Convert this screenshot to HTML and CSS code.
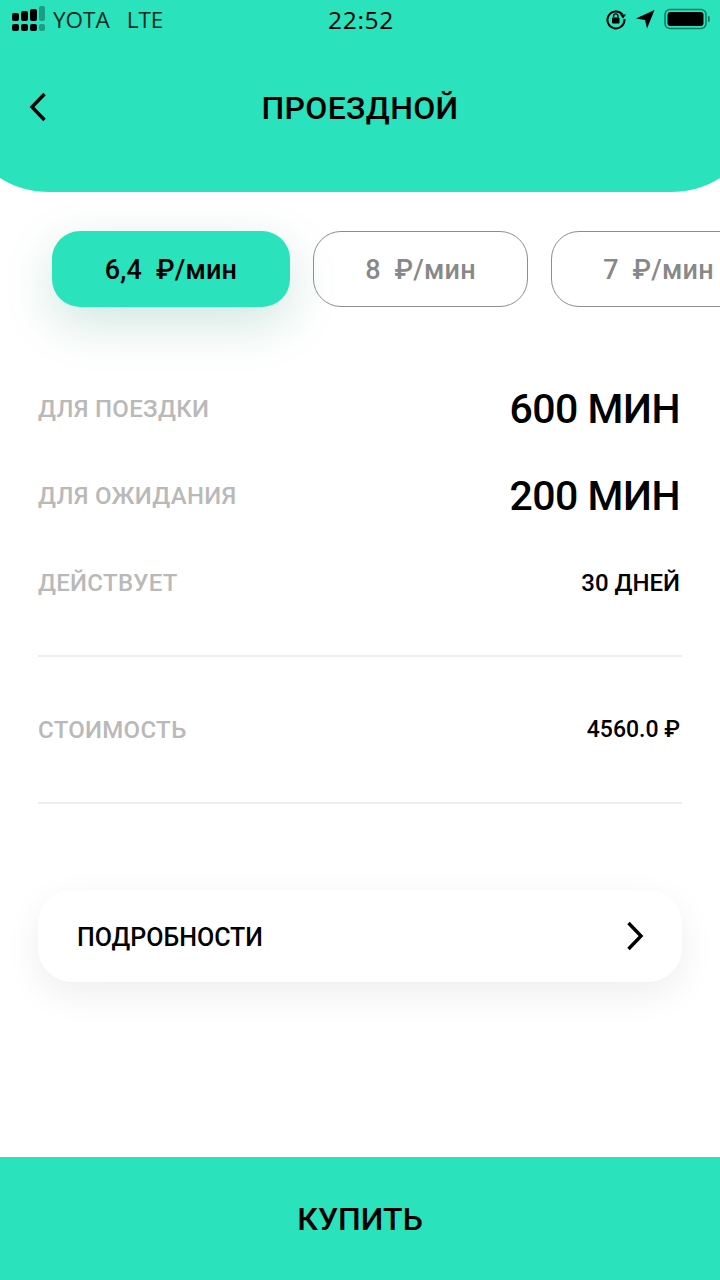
FILE: index.html
```html
<!DOCTYPE html>
<html lang="ru">
<head>
<meta charset="utf-8">
<title>Проездной</title>
<link rel="stylesheet" href="styles.css">
</head>
<body>
<div class="page">
  <header class="header">
    <div class="status">
      <div class="status-left">
        <svg class="signal" width="34" height="26" viewBox="0 0 34 26">
          <g fill="#000">
            <rect x="0" y="7" width="7" height="8" rx="2"/><rect x="0" y="18" width="7" height="7" rx="2"/>
            <rect x="9" y="5" width="7" height="10" rx="2"/><rect x="9" y="18" width="7" height="7" rx="2"/>
            <rect x="18" y="3" width="7" height="12" rx="2"/><rect x="18" y="18" width="7" height="7" rx="2"/>
          </g>
          <g fill="#000" opacity=".3">
            <rect x="27" y="0" width="6" height="15" rx="2"/><rect x="27" y="18" width="6" height="7" rx="2"/>
          </g>
        </svg>
        <span>YOTA</span><span class="lte">LTE</span>
      </div>
      <div class="clock">22:52</div>
      <div class="status-right">
        <svg width="22" height="22" viewBox="0 0 22 22">
          <path d="M17.5 6.5A8.5 8.5 0 1 0 19.4 11" fill="none" stroke="#000" stroke-width="2"/>
          <path d="M15 6.5h6l-3 4z" fill="#000"/>
          <rect x="7" y="9.5" width="7.5" height="6" rx="1" fill="#000"/>
          <path d="M8.6 9.5V8a2.1 2.1 0 0 1 4.3 0v1.5" fill="none" stroke="#000" stroke-width="1.4"/>
        </svg>
        <svg width="19" height="20" viewBox="0 0 19 20"><path d="M0 9.5 18.500 1 11 19.500 9 11z" fill="#000"/></svg>
        <svg width="46" height="22" viewBox="0 0 46 22">
          <rect x="1" y="1.500" width="41" height="19" rx="5" fill="none" stroke="#000" stroke-opacity=".45" stroke-width="1.600"/>
          <rect x="3.500" y="4" width="36" height="14" rx="3" fill="#000"/>
          <rect x="44" y="8" width="1.600" height="6" rx=".8" fill="#000" fill-opacity=".5"/>
        </svg>
      </div>
    </div>
    <div class="titlebar">
      <svg class="back" width="18" height="30" viewBox="0 0 18 30"><path d="M15.500 2 3 15l12.500 13" fill="none" stroke="#000" stroke-width="3.400"/></svg>
      <h1 class="title">ПРОЕЗДНОЙ</h1>
    </div>
  </header>

  <div class="tabs">
    <div class="tab tab-active">6,4&nbsp; ₽/мин</div>
    <div class="tab tab-mid">8&nbsp; ₽/мин</div>
    <div class="tab tab-last">7&nbsp; ₽/мин</div>
  </div>

  <section class="rows">
    <div class="row"><span class="label">ДЛЯ ПОЕЗДКИ</span><span class="big">600 МИН</span></div>
    <div class="row"><span class="label">ДЛЯ ОЖИДАНИЯ</span><span class="big">200 МИН</span></div>
    <div class="row"><span class="label">ДЕЙСТВУЕТ</span><span class="small">30 ДНЕЙ</span></div>
  </section>
  <div class="cost">
    <span class="label">СТОИМОСТЬ</span><span class="small price">4560.0 ₽</span>
  </div>

  <div class="details">
    <span class="details-text">ПОДРОБНОСТИ</span>
    <svg width="18" height="30" viewBox="0 0 18 30"><path d="M2.500 2 15 15 2.500 28" fill="none" stroke="#000" stroke-width="3.400"/></svg>
  </div>

  <footer class="buy">КУПИТЬ</footer>
</div>
</body>
</html>
```

FILE: styles.css
```css
* { box-sizing: border-box; }
html, body { margin: 0; padding: 0; }
body {
  width: 720px;
  height: 1280px;
  overflow: hidden;
  background: #fff;
  color: #000;
  font-family: "Roboto", "Noto Sans", sans-serif;
}
.page {
  display: flex;
  flex-direction: column;
  height: 1280px;
  overflow: hidden;
}
.header {
  flex: none;
  height: 192px;
  margin: 0 -20px;
  padding: 0 20px;
  background: #2ae2bb;
  border-radius: 0 0 70px 70px / 0 0 47px 47px;
}
.status {
  display: grid;
  grid-template-columns: 1fr auto 1fr;
  align-items: center;
  height: 38px;
  padding: 0 10px 0 12px;
  font-family: "Open Sans", sans-serif;
  font-size: 22.5px;
}
.status-left { display: flex; align-items: center; gap: 7px; color: #0a2a24; }
.lte { margin-left: 10px; }
.clock { font-size: 24.5px; font-weight: 500; letter-spacing: .7px; }
.status-right { display: flex; align-items: center; justify-content: flex-end; gap: 9px; }
.titlebar {
  position: relative;
  display: flex;
  align-items: center;
  justify-content: center;
  height: 54px;
  margin-top: 43px;
}
.back { position: absolute; left: 29px; top: 11px; }
.title {
  margin: 0;
  font-size: 32px;
  font-weight: 500;
  line-height: 1;
  letter-spacing: .35px;
}
.tabs {
  flex: none;
  display: flex;
  gap: 23px;
  margin-top: 39px;
  padding-left: 52px;
  height: 76px;
}
.tab {
  flex: none;
  display: flex;
  align-items: center;
  justify-content: center;
  height: 76px;
  padding-top: 2px;
  border-radius: 28px;
  font-size: 27px;
  font-weight: 500;
  letter-spacing: .2px;
  white-space: nowrap;
}
.tab-active {
  width: 238px;
  background: #2ae2bb;
  box-shadow: 0 16px 50px rgba(20, 130, 100, .2);
}
.tab-mid, .tab-last {
  border: 1px solid #8d8d8d;
  color: #888;
}
.tab-mid { width: 215px; }
.tab-last { width: 215px; }
.rows {
  flex: none;
  margin-top: 58px;
  padding: 0 40px 0 38px;
}
.row {
  display: flex;
  align-items: center;
  justify-content: space-between;
  height: 87px;
}
.label {
  font-size: 24px;
  font-weight: 500;
  letter-spacing: .3px;
  color: #b9b9b9;
}
.big {
  font-size: 41px;
  font-weight: 500;
  letter-spacing: -.5px;
}
.small {
  font-size: 24px;
  font-weight: 500;
}
.price { font-size: 23px; }
.cost {
  flex: none;
  display: flex;
  align-items: center;
  justify-content: space-between;
  height: 149px;
  margin: 29px 38px 0;
  padding-right: 2px;
  border-top: 2px solid #eee;
  border-bottom: 2px solid #eee;
}
.details {
  flex: none;
  display: flex;
  align-items: center;
  justify-content: space-between;
  height: 92px;
  margin: 86px 38px 0;
  padding: 0 38px 0 39px;
  border-radius: 34px;
  background: #fff;
  box-shadow: 0 12px 36px rgba(0, 0, 0, .07);
}
.details-text { font-size: 25px; font-weight: 500; padding-top: 2px; }
.buy {
  flex: none;
  display: flex;
  align-items: center;
  justify-content: center;
  height: 123px;
  margin-top: auto;
  background: #2ae2bb;
  font-size: 32px;
  font-weight: 500;
}
```
